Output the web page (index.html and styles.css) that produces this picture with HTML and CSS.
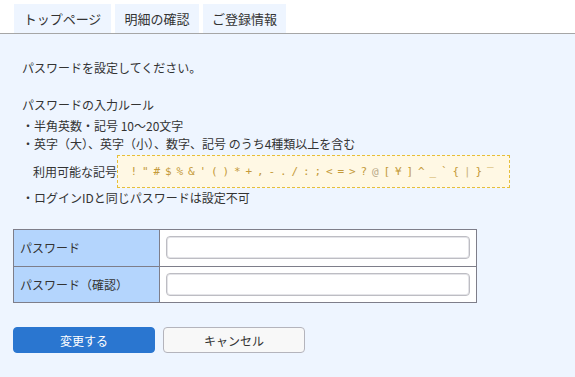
FILE: index.html
```html
<!DOCTYPE html>
<html lang="ja">
<head>
<meta charset="utf-8">
<link rel="stylesheet" href="styles.css">
</head>
<body>
<nav class="tabs">
  <a class="tab tab-top">トップページ</a>
  <a class="tab tab-detail">明細の確認</a>
  <a class="tab tab-info">ご登録情報</a>
</nav>
<main class="main">
  <div class="texts">
    <p class="lead">パスワードを設定してください。</p>
    <h2 class="rule-title">パスワードの入力ルール</h2>
    <ul class="rules">
      <li>・半角英数・記号 10〜20文字</li>
      <li>・英字（大）、英字（小）、数字、記号 のうち4種類以上を含む</li>
      <li class="symbols-row">
        <span class="symbols-label">利用可能な記号</span>
        <span class="symbols"><span>!</span><span>"</span><span>#</span><span>$</span><span>%</span><span>&amp;</span><span>'</span><span>(</span><span>)</span><span>*</span><span>+</span><span>,</span><span>-</span><span>.</span><span>/</span><span>:</span><span>;</span><span>&lt;</span><span>=</span><span>&gt;</span><span>?</span><span class="at">@</span><span>[</span><span>¥</span><span>]</span><span>^</span><span>_</span><span>`</span><span>{</span><span class="bar">|</span><span>}</span><span>‾</span></span>
      </li>
      <li class="last">・ログインIDと同じパスワードは設定不可</li>
    </ul>
  </div>
  <table class="form-table">
    <tr>
      <th>パスワード</th>
      <td><input class="field" type="password"></td>
    </tr>
    <tr>
      <th>パスワード（確認）</th>
      <td><input class="field" type="password"></td>
    </tr>
  </table>
  <div class="actions">
    <button class="btn btn-primary">変更する</button>
    <button class="btn btn-secondary">キャンセル</button>
  </div>
</main>
</body>
</html>
```
FILE: styles.css
```css
* { box-sizing: border-box; }
html, body {
  margin: 0;
  padding: 0;
  height: 100%;
}
body {
  background: #ffffff;
  font-family: "Noto Sans CJK JP", "Noto Sans", sans-serif;
  color: #333333;
  font-size: 12px;
  display: flex;
  flex-direction: column;
}
.tabs {
  display: flex;
  gap: 4px;
  padding: 4px 0 0 14px;
  border-bottom: 1px solid #a6a6a6;
}
.tab {
  display: block;
  background: #eef5ff;
  height: 29px;
  line-height: 29px;
  text-align: center;
  font-size: 13px;
  color: #333;
}
.tab-top { width: 97px; }
.tab-detail { width: 84px; }
.tab-info { width: 83px; }
.main {
  flex: 1;
  background: #eef5ff;
  padding: 25px 13px 0 13px;
}
.texts {
  padding-left: 9px;
  line-height: 18px;
}
.lead { margin: 0 0 19px 0; }
.rule-title {
  margin: 0 0 3px 0;
  font-size: 12px;
  font-weight: normal;
}
.rules {
  list-style: none;
  margin: 0;
  padding: 0;
}
.symbols-row {
  display: flex;
  align-items: center;
  margin: 2px 0 1px 0;
}
.symbols-label {
  padding-left: 11px;
  width: 95px;
}
.symbols {
  display: flex;
  width: 393px;
  background: #fff8e4;
  border: 1px dashed #e6bf3a;
  padding: 7px 0 7px 10px;
  line-height: 17px;
  color: #c49a3a;
  font-family: "DejaVu Sans Mono", monospace;
  font-size: 11px;
  white-space: nowrap;
}
.symbols span {
  display: block;
  width: 11.5px;
  text-align: center;
}
.symbols .at { color: #b8a888; }
.symbols .bar { color: #c8b27a; }
.form-table {
  margin-top: 22px;
  border-collapse: collapse;
  width: 464px;
  background: #ffffff;
}
.form-table th,
.form-table td {
  border: 1px solid #7e7e8a;
  height: 36.5px;
  padding: 0;
}
.form-table th {
  width: 146px;
  background: #b4d5fd;
  font-weight: normal;
  text-align: left;
  padding-left: 6px;
  font-size: 12px;
  color: #333;
}
.form-table td {
  padding: 0 6px;
}
.field {
  display: block;
  width: 100%;
  height: 23px;
  border: 1px solid #bdbdc3;
  border-radius: 4px;
  background: #fff;
  box-shadow: inset 0 0 0 1px #e4e4e8;
}
.actions {
  display: flex;
  gap: 8px;
  margin-top: 24px;
}
.btn {
  width: 142px;
  height: 26px;
  border-radius: 4px;
  font-family: "Noto Sans CJK JP", "Noto Sans", sans-serif;
  font-size: 12px;
  padding: 0;
}
.btn-primary {
  background: #2a76d0;
  border: 1px solid #2a76d0;
  color: #ffffff;
}
.btn-secondary {
  background: #f8f8f8;
  border: 1px solid #b4b4bc;
  color: #333;
}
```
